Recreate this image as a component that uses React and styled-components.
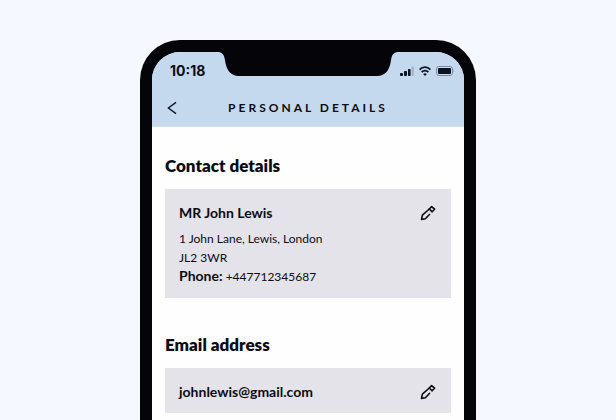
import React from 'react';
import styled, { createGlobalStyle } from 'styled-components';

const font = '"Gill Sans", Lato, sans-serif';

const GlobalStyle = createGlobalStyle`
  *{
    box-sizing: border-box;
  }
  body{
    margin: 0;
    background: #f5f8fe;
    color: #0c0c12;
    font-family: ${font};
  }
  h1, h2, h3, p{
    margin: 0;
  }
`;

const Page = styled.div`
  display: flex;
  justify-content: center;
  height: 100vh;
  padding-top: 40px;
  overflow: hidden;
`;

const Phone = styled.div`
  width: 100%;
  max-width: 336px;
  height: 680px;
  flex-shrink: 0;
  padding: 12px;
  border-radius: 40px;
  background: #050409;
`;

const Screen = styled.div`
  height: 100%;
  border-radius: 28px;
  background: #fefefe;
  overflow: hidden;
`;

const Header = styled.header`
  background: #c5d9ee;
  border-bottom: 1px solid #d6dce8;
`;

const StatusBar = styled.div`
  position: relative;
  display: flex;
  justify-content: space-between;
  align-items: center;
  height: 38px;
  padding: 0 9px 0 18px;
`;

const Notch = styled.svg`
  position: absolute;
  top: 0;
  left: 50%;
  transform: translateX(-50%);
`;

const Time = styled.time`
  font: 700 14px/16px Inter, sans-serif;
`;

const StatusIcons = styled.div`
  display: flex;
  align-items: center;
  gap: 5px;
`;

const NavBar = styled.div`
  display: grid;
  grid-template-columns: 40px 1fr 40px;
  align-items: center;
  height: 36px;
`;

const IconButton = styled.button`
  display: flex;
  flex-shrink: 0;
  align-items: center;
  justify-content: center;
  width: ${props => props.$width}px;
  height: ${props => props.$height}px;
  padding: 0;
  border: 0;
  background: none;
  color: inherit;
  cursor: pointer;
`;

const Title = styled.h1`
  font-size: 12px;
  line-height: 16px;
  font-weight: 700;
  letter-spacing: 3px;
  text-align: center;
  text-transform: uppercase;
  white-space: nowrap;
`;

const Content = styled.main`
  display: flex;
  flex-direction: column;
  gap: 35px;
  padding: 27px 13px;
`;

const Section = styled.section`
  display: flex;
  flex-direction: column;
  gap: 11px;
`;

const SectionTitle = styled.h2`
  font-size: 17px;
  line-height: 24px;
  font-weight: 800;
`;

const Card = styled.div`
  display: flex;
  flex-direction: column;
  gap: 7px;
  padding: 14px 14px 12px;
  background: #e3e3e9;
  font-size: 12px;
  line-height: 19px;

  strong{
    font-size: 14px;
    line-height: 1;
  }
`;

const CardHead = styled.div`
  display: flex;
  justify-content: space-between;
  align-items: center;
`;

const CardTitle = styled.h3`
  font-size: 14px;
  line-height: 19px;
  font-weight: 700;
`;

function SignalIcon() {
    return (
        <svg width="14" height="10" viewBox="0 0 14 10" fill="#0b1222" aria-hidden="true">
            <rect x="0" y="7" width="3" height="3" rx="0.8" />
            <rect x="4" y="5" width="3" height="5" rx="0.8" />
            <rect x="8" y="3" width="2.6" height="7" rx="0.8" />
            <rect x="11.6" y="0.4" width="2.2" height="9.6" rx="0.8" fill="#a3b3c8" />
        </svg>
    )
}

function WifiIcon() {
    return (
        <svg width="12" height="10" viewBox="0 0 12 10" fill="none" stroke="#0b1222" strokeWidth="1.8" aria-hidden="true">
            <path d="M0.6 3.6C3.6 0.4 8.4 0.4 11.4 3.6" />
            <path d="M2.6 6.2C4.6 4.2 7.4 4.2 9.4 6.2" />
            <path d="M6 10L4.1 8Q6 6.4 7.9 8Z" fill="#0b1222" stroke="none" />
        </svg>
    )
}

function BatteryIcon() {
    return (
        <svg width="19" height="10" viewBox="0 0 19 10" aria-hidden="true">
            <rect x="0.5" y="0.5" width="16" height="9" rx="2.4" fill="none" stroke="#7d8b9e" />
            <rect x="2" y="2" width="13" height="6" rx="1" fill="#0b1222" />
            <path d="M17.6 3.4Q19 5 17.6 6.6Z" fill="#7d8b9e" />
        </svg>
    )
}

function BackIcon() {
    return (
        <svg width="10" height="14" viewBox="0 0 10 14" fill="none" stroke="#10182a" strokeWidth="1.4" aria-hidden="true">
            <path d="M9 1.4L1.4 7L9 12.6" />
        </svg>
    )
}

function PencilIcon() {
    return (
        <svg width="16" height="16" viewBox="0 0 16 16" fill="none" stroke="#0c0c12" strokeWidth="1.6" strokeLinejoin="round" strokeLinecap="round" aria-hidden="true">
            <path d="M9.3 4L2.4 10.2L1.5 14.4L5.4 13.7L9.6 9.3" />
            <path d="M9.3 4L11.6 1.6L14.6 4.2L12.2 6.8Z" />
        </svg>
    )
}

function EditButton({ label }) {
    return (
        <IconButton type="button" $width={18} $height={18} aria-label={label}>
            <PencilIcon />
        </IconButton>
    )
}

function App() {
    return (
        <Page>
            <GlobalStyle />
            <Phone>
                <Screen>
                    <Header>
                        <StatusBar>
                            <Notch width="178" height="25" viewBox="0 0 178 25" aria-hidden="true">
                                <path d="M0 0C4 1 5 3 6 8C7 17 11 24 20 24H158C167 24 171 17 172 8C173 3 174 1 178 0Z" fill="#050409" />
                            </Notch>
                            <Time>10:18</Time>
                            <StatusIcons>
                                <SignalIcon />
                                <WifiIcon />
                                <BatteryIcon />
                            </StatusIcons>
                        </StatusBar>
                        <NavBar>
                            <IconButton type="button" $width={40} $height={36} aria-label="Back">
                                <BackIcon />
                            </IconButton>
                            <Title>Personal details</Title>
                        </NavBar>
                    </Header>
                    <Content>
                        <Section>
                            <SectionTitle>Contact details</SectionTitle>
                            <Card>
                                <CardHead>
                                    <CardTitle>MR John Lewis</CardTitle>
                                    <EditButton label="Edit contact details" />
                                </CardHead>
                                <div>
                                    <p>1 John Lane, Lewis, London</p>
                                    <p>JL2 3WR</p>
                                    <p><strong>Phone:</strong> +447712345687</p>
                                </div>
                            </Card>
                        </Section>
                        <Section>
                            <SectionTitle>Email address</SectionTitle>
                            <Card>
                                <CardHead>
                                    <CardTitle>johnlewis@gmail.com</CardTitle>
                                    <EditButton label="Edit email address" />
                                </CardHead>
                            </Card>
                        </Section>
                    </Content>
                </Screen>
            </Phone>
        </Page>
    )
}

export default App;
